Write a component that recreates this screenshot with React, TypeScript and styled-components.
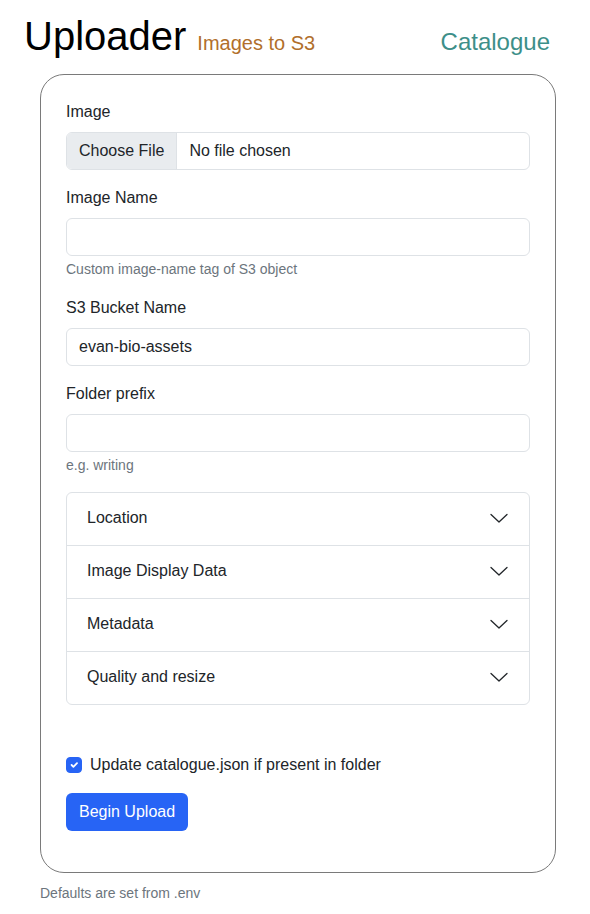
import React, { useState } from 'react';
import styled, { createGlobalStyle } from 'styled-components';

const GlobalStyle = createGlobalStyle`
  * { box-sizing: border-box; }
  body {
    margin: 0;
    background: #ffffff;
    font-family: "Liberation Sans", Arial, sans-serif;
    color: #212529;
    font-size: 16px;
    line-height: 1.5;
  }
`;

const Page = styled.div`
  width: 590px;
  padding-bottom: 20px;
`;

const Header = styled.header`
  display: flex;
  align-items: baseline;
  justify-content: space-between;
  margin-top: 12px;
  padding: 0 40px 0 24px;
`;

const TitleGroup = styled.div`
  display: flex;
  align-items: baseline;
  gap: 11px;
`;

const Title = styled.h1`
  margin: 0;
  font-size: 40px;
  font-weight: 400;
  line-height: 1.2;
  color: #000;
`;

const Subtitle = styled.span`
  font-size: 20px;
  color: #b16f2b;
`;

const NavLink = styled.a`
  font-size: 24px;
  color: #3d8f89;
  text-decoration: none;
`;

const Card = styled.form`
  margin: 14px 34px 0 40px;
  padding: 25px 25px 41px 25px;
  border: 1px solid #7a7a7a;
  border-radius: 24px;
  display: flex;
  flex-direction: column;
`;

const Field = styled.div`
  margin-bottom: 16px;
`;

const Label = styled.label`
  display: block;
  margin-bottom: 8px;
`;

const Input = styled.input`
  display: block;
  width: 100%;
  height: 38px;
  padding: 6px 12px;
  font: inherit;
  color: #212529;
  border: 1px solid #dee2e6;
  border-radius: 6px;
  background: #fff;
  outline: none;
`;

const FileBox = styled.div`
  display: flex;
  height: 38px;
  border: 1px solid #dee2e6;
  border-radius: 6px;
  overflow: hidden;
`;

const FileButton = styled.span`
  display: flex;
  align-items: center;
  padding: 0 12px;
  background: #e9ecef;
  border-right: 1px solid #dee2e6;
`;

const FileName = styled.span`
  display: flex;
  align-items: center;
  padding: 0 12px;
`;

const Help = styled.div`
  margin-top: 3px;
  font-size: 14px;
  color: #6c757d;
`;

const Accordion = styled.div`
  border: 1px solid #dee2e6;
  border-radius: 6px;
  margin-bottom: 48px;
`;

const AccordionItem = styled.button<{ last?: boolean }>`
  display: flex;
  align-items: center;
  justify-content: space-between;
  width: 100%;
  height: ${p => (p.last ? '52px' : '53px')};
  padding: 0 20px 2px 20px;
  font: inherit;
  color: #212529;
  text-align: left;
  background: transparent;
  border: none;
  border-bottom: ${p => (p.last ? 'none' : '1px solid #dee2e6')};
  cursor: pointer;
`;

const CheckRow = styled.label`
  display: flex;
  align-items: center;
  gap: 8px;
  margin-bottom: 16px;
`;

const CheckBox = styled.span<{ checked: boolean }>`
  width: 16px;
  height: 16px;
  border-radius: 4px;
  background: ${p => (p.checked ? '#2764f5' : '#fff')};
  border: 1px solid ${p => (p.checked ? '#2764f5' : '#dee2e6')};
  display: flex;
  align-items: center;
  justify-content: center;
`;

const SubmitButton = styled.button`
  align-self: flex-start;
  height: 38px;
  padding: 0 13px;
  font: inherit;
  color: #fff;
  background: #2764f5;
  border: none;
  border-radius: 6px;
  cursor: pointer;
`;

const Footer = styled.div`
  margin: 10px 0 0 40px;
  font-size: 14px;
  color: #6c757d;
`;

const Chevron = () => (
  <svg width="20" height="20" viewBox="0 0 20 20">
    <polyline points="2,6.5 10,14 18,6.5" fill="none" stroke="#212529" strokeWidth="1.3" strokeLinecap="round" strokeLinejoin="round" />
  </svg>
);

const sections = ['Location', 'Image Display Data', 'Metadata', 'Quality and resize'];

export default function App() {
  const [update, setUpdate] = useState(true);
  const [bucket, setBucket] = useState('evan-bio-assets');

  return (
    <Page>
      <GlobalStyle />
      <Header>
        <TitleGroup>
          <Title>Uploader</Title>
          <Subtitle>Images to S3</Subtitle>
        </TitleGroup>
        <NavLink href="#">Catalogue</NavLink>
      </Header>

      <Card onSubmit={e => e.preventDefault()}>
        <Field>
          <Label>Image</Label>
          <FileBox>
            <FileButton>Choose File</FileButton>
            <FileName>No file chosen</FileName>
          </FileBox>
        </Field>

        <Field>
          <Label>Image Name</Label>
          <Input type="text" />
          <Help>Custom image-name tag of S3 object</Help>
        </Field>

        <Field>
          <Label>S3 Bucket Name</Label>
          <Input type="text" value={bucket} onChange={e => setBucket(e.target.value)} />
        </Field>

        <Field>
          <Label>Folder prefix</Label>
          <Input type="text" />
          <Help>e.g. writing</Help>
        </Field>

        <Accordion>
          {sections.map((s, i) => (
            <AccordionItem type="button" key={s} last={i === sections.length - 1}>
              {s}
              <Chevron />
            </AccordionItem>
          ))}
        </Accordion>

        <CheckRow onClick={() => setUpdate(!update)}>
          <CheckBox checked={update}>
            {update && (
              <svg width="12" height="12" viewBox="0 0 20 20">
                <path fill="none" stroke="#fff" strokeLinecap="round" strokeLinejoin="round" strokeWidth="3" d="m6 10 3 3 6-6" />
              </svg>
            )}
          </CheckBox>
          Update catalogue.json if present in folder
        </CheckRow>

        <SubmitButton type="submit">Begin Upload</SubmitButton>
      </Card>

      <Footer>Defaults are set from .env</Footer>
    </Page>
  );
}
